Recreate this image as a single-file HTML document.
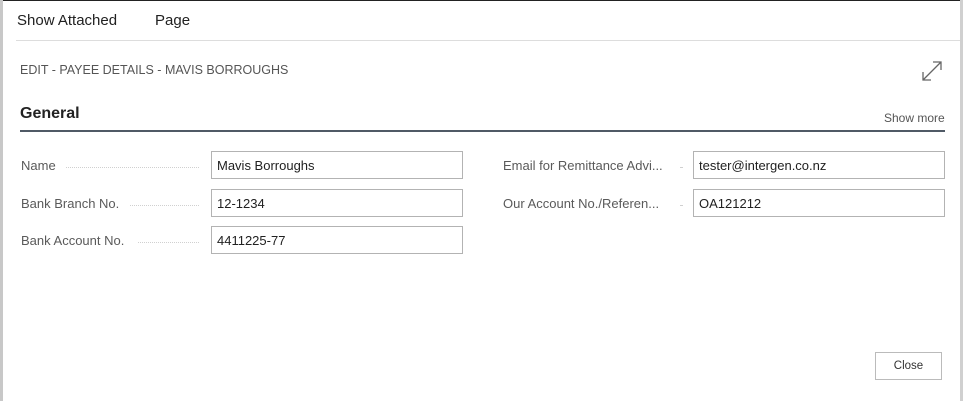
<!DOCTYPE html>
<html><head><style>
*{margin:0;padding:0;box-sizing:border-box}
body{width:963px;height:401px;background:#fff;position:relative;overflow:hidden;font-family:"Segoe UI","Liberation Sans",sans-serif;color:#212121}
.a{position:absolute;white-space:nowrap}
.lbl{font-size:13px;color:#5a5a5a}
.dots{position:absolute;border-top:1px dotted #d0d0d0;height:0}
.inp{position:absolute;border:1px solid #b3b3b3;height:28px;font-size:13px;padding:6px 0 0 5px;color:#212121}
</style></head><body>
<div class="a" style="left:0;top:0;width:963px;height:1px;background:#222"></div>
<div class="a" style="left:0;top:0;width:3px;height:401px;background:#c8c8c8"></div>
<div class="a" style="left:960px;top:0;width:3px;height:401px;background:#d0d0d0"></div>
<div class="a" style="left:17px;top:12px;font-size:15px">Show Attached</div>
<div class="a" style="left:155px;top:12px;font-size:15px">Page</div>
<div class="a" style="left:16px;top:40px;width:944px;height:1px;background:#ddd"></div>
<div class="a" style="left:20px;top:63px;font-size:12.5px;color:#555">EDIT - PAYEE DETAILS - MAVIS BORROUGHS</div>
<svg class="a" style="left:920px;top:60px" width="24" height="24" viewBox="0 0 24 24"><path d="M3 20L21 2M13 2h8v8M3 12v8h8" fill="none" stroke="#666" stroke-width="1.3"/></svg>
<div class="a" style="left:20px;top:105px;font-size:16px;font-weight:bold;color:#222">General</div>
<div class="a" style="left:884px;top:111px;font-size:12px;color:#555">Show more</div>
<div class="a" style="left:20px;top:130px;width:925px;height:2px;background:#505a66"></div>
<div class="a lbl" style="left:21px;top:158px">Name</div><div class="dots" style="left:66px;top:167px;width:133px"></div>
<div class="inp" style="left:211px;top:151px;width:252px">Mavis Borroughs</div>
<div class="a lbl" style="left:21px;top:196px">Bank Branch No.</div><div class="dots" style="left:130px;top:205px;width:69px"></div>
<div class="inp" style="left:211px;top:189px;width:252px">12-1234</div>
<div class="a lbl" style="left:21px;top:233px">Bank Account No.</div><div class="dots" style="left:138px;top:242px;width:61px"></div>
<div class="inp" style="left:211px;top:226px;width:252px">4411225-77</div>
<div class="a lbl" style="left:503px;top:158px">Email for Remittance Advi...</div><div class="dots" style="left:680px;top:167px;width:2px"></div>
<div class="inp" style="left:693px;top:151px;width:252px">tester@intergen.co.nz</div>
<div class="a lbl" style="left:503px;top:196px">Our Account No./Referen...</div><div class="dots" style="left:680px;top:205px;width:2px"></div>
<div class="inp" style="left:693px;top:189px;width:252px">OA121212</div>
<div class="a" style="left:875px;top:352px;width:67px;height:28px;border:1px solid #bbb;font-size:11.5px;text-align:center;padding-top:7px;color:#333">Close</div>
</body></html>
